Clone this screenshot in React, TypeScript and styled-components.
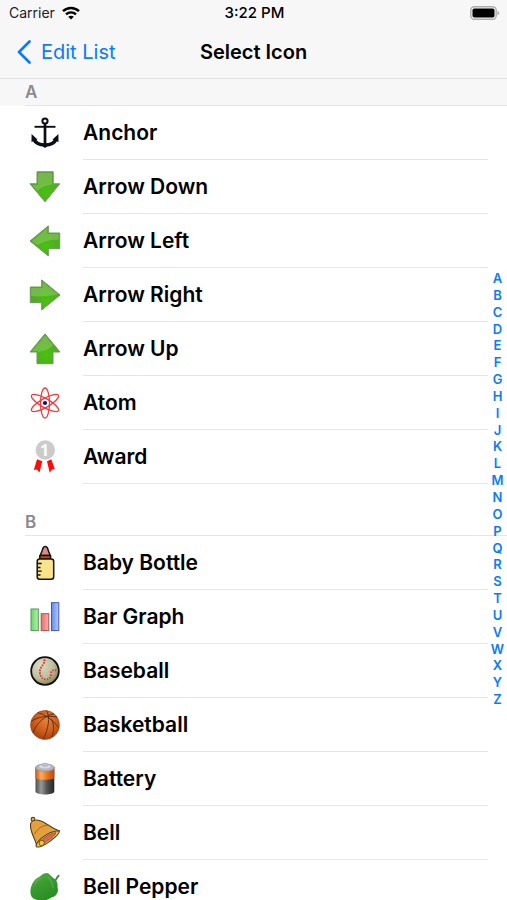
import React from "react";
import styled, { createGlobalStyle } from "styled-components";

const GlobalStyle = createGlobalStyle`
  * { box-sizing: border-box; }
  body {
    margin: 0;
    background: #fff;
    color: #000;
    font-family: Inter, "Liberation Sans", sans-serif;
  }
  button { font: inherit; color: inherit; border: 0; background: none; padding: 0; cursor: pointer; }
`;

const Screen = styled.div`
  position: relative;
  height: 100vh;
  display: flex;
  flex-direction: column;
  overflow: hidden;
`;

const TopBar = styled.header`
  flex: none;
  background: #f7f7f7;
  border-bottom: 1px solid #e0e0e0;
`;

const StatusBar = styled.div`
  display: grid;
  grid-template-columns: 1fr auto 1fr;
  align-items: center;
  height: 26px;
  padding: 0 7px 0 9px;
  font-size: 14px;
  line-height: 26px;
`;

const Carrier = styled.div`
  display: flex;
  align-items: center;
  gap: 7px;
  color: #222;
`;

const Clock = styled.div`
  font-size: 15px;
  font-weight: 500;
`;

const StatusEnd = styled.div`
  display: flex;
  justify-content: flex-end;
`;

const NavBar = styled.nav`
  display: grid;
  grid-template-columns: 1fr auto 1fr;
  align-items: center;
  height: 52px;
  padding: 0 16px;
`;

const BackButton = styled.button`
  display: flex;
  align-items: center;
  justify-self: start;
  gap: 9px;
  color: #0a7aff;
  font-size: 20px;
  line-height: 28px;
`;

const Title = styled.h1`
  margin: 0;
  font-size: 20px;
  font-weight: 600;
  line-height: 28px;
`;

const List = styled.main`
  flex: 1;
  min-height: 0;
  overflow-y: auto;
  scrollbar-width: none;
`;

const Section = styled.section`
  & + & { margin-top: 25px; }
`;

const SectionTitle = styled.h2<{ $pinned: boolean }>`
  display: flex;
  margin: 0;
  padding-left: 25px;
  background: ${(p) => (p.$pinned ? "#f7f7f7" : "#fff")};
  color: #8a8a8c;
  font-size: 17px;
  font-weight: 600;
  line-height: 26px;

  span {
    flex: 1;
    border-bottom: 1px solid #e6e6e6;
  }
`;

const Rows = styled.ul`
  margin: 0;
  padding: 0;
  list-style: none;
`;

const Row = styled.button`
  display: flex;
  align-items: stretch;
  width: 100%;
  height: 54px;
  padding: 0 19px 0 29px;
  text-align: left;

  svg {
    flex: none;
    align-self: center;
    overflow: visible;
  }
`;

const RowLabel = styled.span`
  flex: 1;
  margin-left: 22px;
  border-bottom: 1px solid #e6e6e6;
  font-size: 21px;
  font-weight: 600;
  line-height: 53px;
`;

const IndexBar = styled.nav`
  position: absolute;
  top: 270px;
  right: 0;
  display: flex;
  flex-direction: column;
  width: 19px;
  height: 438px;
`;

const IndexLink = styled.a`
  flex: 1;
  color: #0a7aff;
  font-size: 13px;
  font-weight: 600;
  line-height: 16px;
  text-align: center;
  text-decoration: none;
`;

const Art = ({ children }: { children: React.ReactNode }) => (
  <svg width="32" height="32" viewBox="0 0 32 32" aria-hidden="true">
    {children}
  </svg>
);

const Anchor = () => (
  <Art>
    <g fill="none" stroke="#0b0f14">
      <circle cx="16" cy="4" r="2.600" strokeWidth="2" />
      <path d="M5.500 9.800h21" strokeWidth="1.900" />
      <path d="M16 7v22" strokeWidth="2.700" />
      <path d="M4.300 21.500C6.400 26 11 28 16 28S25.600 26 27.700 21.500" strokeWidth="3.400" />
    </g>
    <path d="M2.600 17 8.500 22.500 2.500 25ZM29.400 17 23.500 22.500 29.500 25ZM12 28 16 31l4-3-4-2z" fill="#0b0f14" />
  </Art>
);

type Direction = "down" | "left" | "right" | "up";

const arrowShapes: Record<Direction, { body: string; shine: string }> = {
  down: {
    body: "M8 .8h16.200v12h6.500L16 30.800 1 12.800h7z",
    shine: "M9 2h14v12h5c-7-1-15 1-20 6L3.500 14H9z",
  },
  left: {
    body: "M1 16 19.300.900V8H30.700v15.700H19.300v7.200z",
    shine: "M3 16 18.300 3v6H29.700v6C22 14 14 17 8 20z",
  },
  right: {
    body: "M31 16 12.700.900V8H1.300v15.700h11.400v7.200z",
    shine: "M29 15.500 13.700 3v6H2.300v8C10 18 20 17 29 15.500z",
  },
  up: {
    body: "M16 .9 31 19h-7v11.700H8V19H1z",
    shine: "M16 2.500 24 12C20 18 12 17 9 20V18H3.200z",
  },
};

const Arrow = ({ to }: { to: Direction }) => (
  <Art>
    <defs>
      <radialGradient id={`arrow-${to}`} cx="55%" cy="70%" r="70%">
        <stop offset="0" stopColor="#47c40c" />
        <stop offset=".55" stopColor="#52ab26" />
        <stop offset="1" stopColor="#5f9f3a" />
      </radialGradient>
    </defs>
    <path d={arrowShapes[to].body} fill={`url(#arrow-${to})`} stroke="#6c9658" strokeWidth="1" strokeLinejoin="round" />
    <path d={arrowShapes[to].shine} fill="#c9efa0" opacity=".26" />
  </Art>
);

const Atom = () => (
  <Art>
    <g fill="none" stroke="#f23a3c" strokeWidth="1.300">
      <ellipse cx="16" cy="16" rx="4.500" ry="15" />
      <ellipse cx="16" cy="16" rx="4.500" ry="15.500" transform="rotate(60 16 16)" />
      <ellipse cx="16" cy="16" rx="4.500" ry="15.500" transform="rotate(-60 16 16)" />
    </g>
    <circle cx="16" cy="16" r="2.100" fill="#0b0b8e" />
  </Art>
);

const AwardNumber = styled.text`
  font-family: "Open Sans", sans-serif;
  font-size: 16px;
  font-weight: 700;
`;

const Award = () => (
  <Art>
    <path d="M8 18.200 13.300 20.200 10.500 31.500 7.700 28.500 4.800 29ZM18 20.200l4.300-2 3.500 10-2.900.2-2.200 3.400z" fill="#fb0d0d" />
    <circle cx="16.300" cy="9" r="9.700" fill="#cbcbcb" />
    <AwardNumber x="15.500" y="14.800" textAnchor="middle" fill="#fff">1</AwardNumber>
  </Art>
);

const BabyBottle = () => (
  <Art>
    <g stroke="#17120e" strokeWidth="1.500" strokeLinejoin="round">
      <path d="M11.500 8.500C11.500 6 13 5.500 13.500 2.500 14 .500 14.800-.500 16.200-.500S18.500.500 19 2.500c.5 3 2 3.500 2 6z" fill="#d98c8c" />
      <path d="M10.800 8.500h10.800v3.700H10.800z" fill="#b84a16" />
      <rect x="8.200" y="12" width="16.500" height="20.300" rx="2.500" fill="#f9e38b" />
      <path d="M8.500 16.500h4.200M8.500 20.500h3M8.500 24.200h4.200M8.500 28h3" fill="none" strokeWidth="1.300" />
    </g>
  </Art>
);

const BarGraph = () => (
  <Art>
    <defs>
      <linearGradient id="bar-green"><stop stopColor="#6bd36b" /><stop offset="1" stopColor="#b4efac" /></linearGradient>
      <linearGradient id="bar-red"><stop stopColor="#e87070" /><stop offset="1" stopColor="#f4b0ae" /></linearGradient>
      <linearGradient id="bar-blue"><stop stopColor="#628bea" /><stop offset="1" stopColor="#b3caff" /></linearGradient>
    </defs>
    <rect x="2" y="8" width="7.300" height="21.600" fill="url(#bar-green)" stroke="#4f9a55" />
    <rect x="12.200" y="12.700" width="7.600" height="16.900" fill="url(#bar-red)" stroke="#ad5050" />
    <rect x="22.500" y="1.700" width="7.300" height="27.900" fill="url(#bar-blue)" stroke="#4658a8" />
  </Art>
);

const Baseball = () => (
  <Art>
    <defs>
      <radialGradient id="baseball" cx="35%" cy="30%" r="75%">
        <stop stopColor="#dddbc6" />
        <stop offset=".6" stopColor="#c0be9c" />
        <stop offset="1" stopColor="#85855c" />
      </radialGradient>
    </defs>
    <circle cx="16" cy="16" r="13.800" fill="url(#baseball)" stroke="#101010" strokeWidth="1.800" />
    <path d="M15 4.500c2.500 3-4 7-4.200 12 0 4 2 7.500 5.700 8s5.500-2.500 5.500-6 2-3.700 6.500-3" fill="none" stroke="#b9b49b" strokeWidth=".7" />
    <path d="M15 4.500c2.500 3-4 7-4.200 12 0 4 2 7.500 5.700 8s5.500-2.500 5.500-6 2-3.700 6.500-3" fill="none" stroke="#d83a3a" strokeWidth="2" strokeDasharray="1.500 1.300" />
  </Art>
);

const Basketball = () => (
  <Art>
    <defs>
      <radialGradient id="basketball" cx="55%" cy="35%" r="65%">
        <stop stopColor="#e4833c" />
        <stop offset=".6" stopColor="#cc5c1c" />
        <stop offset="1" stopColor="#a8420f" />
      </radialGradient>
    </defs>
    <circle cx="16" cy="16" r="14.500" fill="url(#basketball)" stroke="#9a4a1c" strokeWidth=".6" />
    <g fill="none" stroke="#5a2a12" strokeWidth=".9">
      <path d="M8.500 3.700C15 5 23 9.500 29.500 18.500" />
      <path d="M2 12.500C9 7.500 19 6.500 28 8" />
      <path d="M17.500 1.500C21 7 20 20 14 30.300" />
      <path d="M25 4.800C17 6 7 14 4 24" />
      <path d="M22 10c3.500 5 3 11 1 18" />
    </g>
  </Art>
);

const Battery = () => (
  <Art>
    <defs>
      <linearGradient id="cell-dark">
        <stop stopColor="#4d4d4d" /><stop offset=".3" stopColor="#989898" />
        <stop offset=".6" stopColor="#555" /><stop offset="1" stopColor="#252525" />
      </linearGradient>
      <linearGradient id="cell-copper">
        <stop stopColor="#c85a12" /><stop offset=".3" stopColor="#ffad60" />
        <stop offset=".6" stopColor="#ed771b" /><stop offset="1" stopColor="#b64b0b" />
      </linearGradient>
    </defs>
    <path d="M6.500 4v24.500c0 4 18.800 4 18.800 0V4z" fill="url(#cell-dark)" />
    <path d="M6.500 4v11c0 2.300 18.800 2.300 18.800 0V4z" fill="url(#cell-copper)" />
    <ellipse cx="15.900" cy="4.700" rx="9.400" ry="3.700" fill="#b5b5be" stroke="#8d8d96" strokeWidth=".7" />
    <ellipse cx="15.900" cy="3.500" rx="5.800" ry="2" fill="#d9d9e2" />
    <ellipse cx="16" cy="1.700" rx="3" ry="1.500" fill="#c3c3d2" stroke="#9696a4" strokeWidth=".5" />
  </Art>
);

const Bell = () => (
  <Art>
    <defs>
      <linearGradient id="bell" x1="0" y1="0" x2="1" y2="1">
        <stop stopColor="#e79c3e" /><stop offset=".5" stopColor="#e2a23c" /><stop offset="1" stopColor="#f4c64c" />
      </linearGradient>
    </defs>
    <g stroke="#54401d" strokeWidth="1.100" strokeLinejoin="round">
      <circle cx="4" cy="2.300" r="1.900" fill="#e9b23f" />
      <path d="M1.500 7C2.500 3.500 6.500 2.500 10.500 3.500c7 1.800 10 7 20 10.500L8 29.700C6.500 21 .800 16 1.500 7z" fill="url(#bell)" />
      <path d="M7.500 29.700C4.500 27 18 13.500 30.300 13.700c1.200 4-18 18.500-22.800 16z" fill="#efc15b" />
      <path d="M10.500 27.500C10 24 19 16.500 27 15.500c-1 4-11.500 11.500-16.500 12z" fill="#e0654a" strokeWidth=".5" />
      <circle cx="12.700" cy="26" r="2.700" fill="#f4c43f" strokeWidth=".8" />
    </g>
    <path d="M5.500 17C9 11 14 8 20 8.200" fill="none" stroke="#9a6824" />
  </Art>
);

const BellPepper = () => (
  <Art>
    <defs>
      <linearGradient id="pepper" x1="0" y1="0" x2=".5" y2="1">
        <stop stopColor="#5aa848" /><stop offset=".5" stopColor="#3a9c30" /><stop offset="1" stopColor="#2a8e22" />
      </linearGradient>
    </defs>
    <path d="M1.500 22C1 15.500 4.500 9 9 6.500c3-1.500 5-4.500 8.500-4.500 3 0 4.500 3.500 7 5 3.500 2 4.500 5.500 4 9 1.500 5-1 9.500-6 10.500-4 2.500-7 3.500-11 2.800C7 29 2 28 1.500 22z" fill="url(#pepper)" />
    <path d="M6 13c1-3 3-5 6-6.500M19 6c3 3 5 6 5 11" fill="none" stroke="#75bb60" strokeWidth="2" opacity=".35" />
    <path d="M26 9.500c1.500-.5 1.500-3 3.600-4.700" fill="none" stroke="#438d4b" strokeWidth="2" strokeLinecap="round" />
  </Art>
);

const sections = [
  {
    letter: "A",
    items: [
      { name: "Anchor", icon: <Anchor /> },
      { name: "Arrow Down", icon: <Arrow to="down" /> },
      { name: "Arrow Left", icon: <Arrow to="left" /> },
      { name: "Arrow Right", icon: <Arrow to="right" /> },
      { name: "Arrow Up", icon: <Arrow to="up" /> },
      { name: "Atom", icon: <Atom /> },
      { name: "Award", icon: <Award /> },
    ],
  },
  {
    letter: "B",
    items: [
      { name: "Baby Bottle", icon: <BabyBottle /> },
      { name: "Bar Graph", icon: <BarGraph /> },
      { name: "Baseball", icon: <Baseball /> },
      { name: "Basketball", icon: <Basketball /> },
      { name: "Battery", icon: <Battery /> },
      { name: "Bell", icon: <Bell /> },
      { name: "Bell Pepper", icon: <BellPepper /> },
    ],
  },
];

const letters = "ABCDEFGHIJKLMNOPQRSTUVWXYZ".split("");

export default function App() {
  return (
    <>
      <GlobalStyle />
      <Screen>
        <TopBar>
          <StatusBar>
            <Carrier>
              Carrier
              <svg width="18" height="14" viewBox="0 0 18 14" aria-label="Wi-Fi">
                <g fill="none" stroke="#000" strokeWidth="2.400">
                  <path d="M1 5.200C5.500.900 12.500.900 17 5.200" />
                  <path d="M4 8.300c2.800-2.600 7.200-2.600 10 0" />
                </g>
                <path d="M6.200 10.700c1.600-1.400 4-1.400 5.600 0L9 13.600z" />
              </svg>
            </Carrier>
            <Clock>3:22 PM</Clock>
            <StatusEnd>
              <svg width="30" height="14" viewBox="0 0 30 14" aria-label="Battery full">
                <rect x=".8" y=".8" width="25.400" height="12.400" rx="3.500" fill="#f7f7f7" stroke="#adadad" strokeWidth="1.400" />
                <rect x="2.500" y="2.500" width="22" height="9" rx="1.800" />
                <path d="M27.500 4.700c2.300.8 2.300 3.800 0 4.600z" fill="#adadad" />
              </svg>
            </StatusEnd>
          </StatusBar>
          <NavBar>
            <BackButton type="button">
              <svg width="16" height="24" viewBox="0 0 16 24" aria-hidden="true">
                <path d="M13.500 1.500 3 12l10.500 10.500" fill="none" stroke="currentColor" strokeWidth="2.700" strokeLinecap="round" strokeLinejoin="round" />
              </svg>
              Edit List
            </BackButton>
            <Title>Select Icon</Title>
          </NavBar>
        </TopBar>
        <List>
          {sections.map((section, i) => (
            <Section key={section.letter} id={`section-${section.letter}`}>
              <SectionTitle $pinned={i === 0}>
                <span>{section.letter}</span>
              </SectionTitle>
              <Rows>
                {section.items.map((item) => (
                  <li key={item.name}>
                    <Row type="button">
                      {item.icon}
                      <RowLabel>{item.name}</RowLabel>
                    </Row>
                  </li>
                ))}
              </Rows>
            </Section>
          ))}
        </List>
        <IndexBar aria-label="Section index">
          {letters.map((letter) => (
            <IndexLink key={letter} href={`#section-${letter}`}>{letter}</IndexLink>
          ))}
        </IndexBar>
      </Screen>
    </>
  );
}
